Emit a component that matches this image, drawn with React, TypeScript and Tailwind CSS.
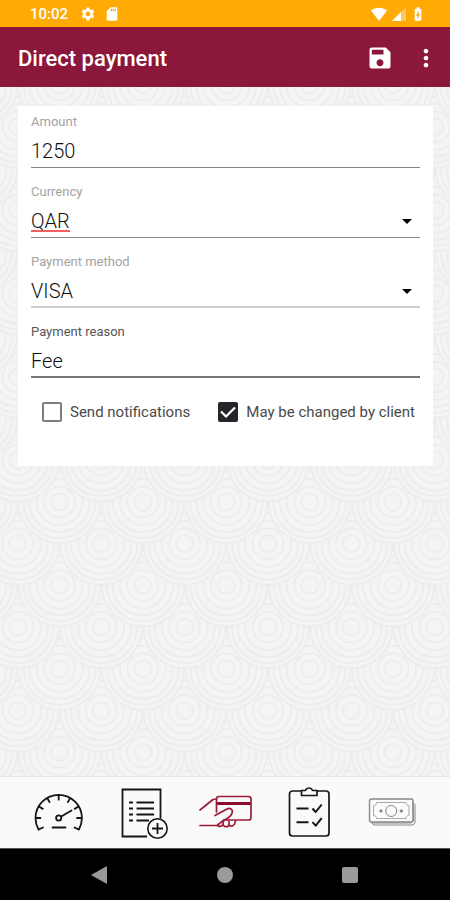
import { useState } from "react";
import type { ReactNode } from "react";
import { MdSettings, MdSdCard, MdSave, MdMoreVert, MdBatteryChargingFull } from "react-icons/md";

const TILE = 83.4;
const HALF = TILE / 2;
const RINGS = [41, 36, 30, 23, 15.5, 8.5];

function Backdrop() {
  // lower rows are drawn first so each row overlaps the one below it
  const rows = [3, 2, 1, 0, -1];

  return (
    <svg className="absolute inset-0 h-full w-full" aria-hidden="true">
      <defs>
        <pattern id="scales" width={TILE} height={TILE} patternUnits="userSpaceOnUse" patternTransform="translate(59.5 -2)">
          {rows.map((row) =>
            [-1, 0, 1].map((col) => {
              const cx = col * TILE + (row % 2 === 0 ? 0 : HALF);
              return RINGS.map((r) => (
                <circle key={`${row}-${col}-${r}`} cx={cx} cy={row * HALF} r={r} fill="#f5f3f4" stroke="#eceaeb" strokeWidth="1.5" />
              ));
            })
          )}
        </pattern>
      </defs>
      <rect width="100%" height="100%" fill="url(#scales)" />
    </svg>
  );
}

function StatusBar() {
  return (
    <div className="flex h-[27px] items-center justify-between bg-[#ffaa05] pt-px pr-6 pl-[30px] text-white">
      <div className="flex items-center">
        <span className="text-[15px] font-medium">10:02</span>
        <MdSettings className="ml-3 size-4" />
        <MdSdCard className="ml-2 size-4" />
      </div>
      <div className="flex items-center gap-1">
        <svg width="18" height="16" viewBox="0 0 18 16" fill="currentColor">
          <path d="M1 4.5C5.5 .8 12.500 .8 17 4.500L9 15z" />
        </svg>
        <svg width="14" height="14" viewBox="0 0 14 14" fill="currentColor">
          <path d="M0 14L14 0v14z" opacity=".35" />
          <path d="M0 14L9 5v9z" />
        </svg>
        <MdBatteryChargingFull className="size-4" />
      </div>
    </div>
  );
}

type FieldProps = {
  id: string;
  label: string;
  labelClass?: string;
  lineClass?: string;
  children: ReactNode;
};

function Field({ id, label, labelClass = "text-[#a3a3a3]", lineClass = "border-b border-[#858585]", children }: FieldProps) {
  return (
    <div className={`flex h-[62px] flex-col ${lineClass}`}>
      <label htmlFor={id} className={`text-[13px] leading-[32px] ${labelClass}`}>
        {label}
      </label>
      {children}
    </div>
  );
}

type SelectProps = {
  id: string;
  options: string[];
  spelling?: boolean;
};

function Select({ id, options, spelling = false }: SelectProps) {
  return (
    <div className="grid h-[26px] items-center">
      <select
        id={id}
        className="col-start-1 row-start-1 h-[26px] w-full appearance-none bg-transparent text-[20px] leading-6 font-light text-[#111] outline-none"
      >
        {options.map((o) => (
          <option key={o}>{o}</option>
        ))}
      </select>
      {spelling && (
        <span className="pointer-events-none col-start-1 row-start-1 mb-[2px] h-0.5 w-[39px] self-end bg-[#f2605f]" />
      )}
      <svg className="pointer-events-none col-start-1 row-start-1 mr-2 justify-self-end" width="10" height="5" viewBox="0 0 10 5">
        <path d="M0 0h10L5 5z" fill="#000" />
      </svg>
    </div>
  );
}

type CheckProps = {
  label: string;
  checked: boolean;
  onChange: (v: boolean) => void;
};

function Check({ label, checked, onChange }: CheckProps) {
  return (
    <label className="flex items-center gap-2 text-[15px] leading-5 whitespace-nowrap text-[#4a4a4a]">
      <span className="grid">
        <input
          type="checkbox"
          checked={checked}
          onChange={(e) => onChange(e.target.checked)}
          className="col-start-1 row-start-1 size-5 appearance-none rounded-xs border-2 border-[#7d7d7d] bg-white checked:border-[#262428] checked:bg-[#262428]"
        />
        {checked && (
          <svg className="pointer-events-none col-start-1 row-start-1" width="20" height="20" viewBox="0 0 20 20" fill="none" stroke="#fff" strokeWidth="2.200">
            <path d="M3 9.500l5 5L17 5.500" />
          </svg>
        )}
      </span>
      {label}
    </label>
  );
}

function GaugeIcon() {
  const ticks = [-180, -150, -120, -90, -60, -30, 0];
  return (
    <svg width="56" height="52" viewBox="0 0 56 52" fill="none" stroke="#151515" strokeWidth="1.8" strokeLinecap="round">
      <path d="M13 40.500L8.500 42.500C6.500 39 5.500 35 5.500 31a23.200 23.200 0 0 1 46.400 0c0 4-1 8-3 11.500L44.500 40.500" />
      {ticks.map((a) => (
        <path key={a} d="M47 31h4.500" transform={`rotate(${a} 28.7 31)`} />
      ))}
      <circle cx="28.700" cy="31" r="2.600" />
      <path d="M31.200 29.500L41.500 23.500M22.500 40.500h13" />
    </svg>
  );
}

function OrderIcon() {
  return (
    <svg width="56" height="52" viewBox="0 0 56 52" fill="none" stroke="#151515" strokeWidth="1.800">
      <path d="M34 49.500H9.500V2.500h38v29" />
      <path d="M16 15.500h4M16 21.500h4M16 27.500h4M16 33.500h4M23.500 15.500H41M23.500 21.500H41M23.500 27.500H41M23.500 33.500H36" />
      <circle cx="44.500" cy="41.500" r="9.700" fill="#fafafa" strokeWidth="1.600" />
      <path d="M39 41.500h11M44.500 36v11" />
    </svg>
  );
}

function PayIcon() {
  return (
    <svg width="56" height="52" viewBox="0 0 56 52" fill="none" stroke="#9b1c38" strokeWidth="1.700" strokeLinecap="round" strokeLinejoin="round">
      <path d="M3 23L16 12.500l3.500-.500" />
      <path d="M19.500 25V12c0-1.500 1-2.500 2.500-2.500h29.500c1.500 0 2.500 1 2.500 2.500v18.500c0 1.500-1 2.500-2.500 2.500H27" />
      <path d="M20 16.500h33.500" strokeWidth="3" stroke="#8b0f2c" strokeLinecap="butt" />
      <path d="M18 28.500L30 22c3-1.500 6 .500 5.300 3.500-.300 1.500-2.300 4-4.300 5.500-2 1.500-4.500 2-6 3.500L20 38.500H3" />
      <path d="M20.500 38.500c2 1.500 4.500 1 5-.500l1-3.500M26 37.500c1 3 5.500 3 6 0V34M32 37.500c1 2.500 4.500 2 5.500-.500l1-3" />
    </svg>
  );
}

function ChecklistIcon() {
  return (
    <svg width="56" height="52" viewBox="0 0 56 52" fill="none" stroke="#151515" strokeWidth="1.700" strokeLinejoin="round">
      <path d="M20 4H11.500a3 3 0 0 0-3 3v39a3 3 0 0 0 3 3h33.500a3 3 0 0 0 3-3V7a3 3 0 0 0-3-3H36" />
      <path d="M20.500 3.500v5h15.500v-5h-4c-1 0-1-2.500-4-2.500s-3 2.500-4 2.500z" />
      <path d="M15.500 21.500H27.500M15.500 35.200H27.500M31.500 21.500l3.200 3.500 6-7.500M31.500 35.200l3.200 3.500 6-7.500" strokeWidth="2" />
    </svg>
  );
}

function CashIcon() {
  return (
    <svg width="56" height="52" viewBox="0 0 56 52" fill="none" stroke="#888" strokeWidth="1">
      <path d="M49 15.500l2 2V36l-2 2H10l-3-2.500" />
      <path d="M49 15.500l.500 18.500-2.500 2H8" />
      <rect x="5.500" y="12" width="43.500" height="23" rx="2" strokeWidth="1.400" />
      <path d="M12.500 15.500h29.500c0 2 1 3 3 3v10c-2 0-3 1-3 3H12.500c0-2-1-3-3-3v-10c2 0 3-1 3-3z" stroke="#aaa" />
      <circle cx="27.200" cy="24" r="5.500" />
      <circle cx="17" cy="24" r="1.200" fill="#888" />
      <circle cx="37.300" cy="24" r="1.200" fill="#888" />
    </svg>
  );
}

const tabs = [
  { name: "Dashboard", icon: <GaugeIcon /> },
  { name: "New order", icon: <OrderIcon /> },
  { name: "Direct payment", icon: <PayIcon /> },
  { name: "Tasks", icon: <ChecklistIcon /> },
  { name: "Cash", icon: <CashIcon /> },
];

export default function App() {
  const [amount, setAmount] = useState("1250");
  const [reason, setReason] = useState("Fee");
  const [notify, setNotify] = useState(false);
  const [editable, setEditable] = useState(true);

  return (
    <div className="flex min-h-screen flex-col bg-[#f5f3f4] font-[Roboto,sans-serif]">
      <StatusBar />

      <header className="flex h-[60px] items-center bg-[#8b173b] pt-0.5 pr-[10px] pl-[18px] text-white">
        <h1 className="flex-1 text-[22px] font-medium">Direct payment</h1>
        <button aria-label="Save">
          <MdSave className="size-7" />
        </button>
        <button aria-label="More options" className="ml-[18px]">
          <MdMoreVert className="size-7" />
        </button>
      </header>

      <main className="relative flex-1 pt-[19px] pr-[17px] pb-6 pl-[18px]">
        <Backdrop />
        <form className="relative bg-white px-[13px] pb-11">
          <div className="flex flex-col gap-2">
            <Field id="amount" label="Amount">
              <input
                id="amount"
                inputMode="numeric"
                value={amount}
                onChange={(e) => setAmount(e.target.value)}
                className="h-[26px] w-full text-[20px] font-light text-[#111] outline-none"
              />
            </Field>
            <Field id="currency" label="Currency">
              <Select id="currency" options={["QAR", "USD", "EUR"]} spelling />
            </Field>
            <Field id="method" label="Payment method" lineClass="border-b-2 border-[#cfcfcf]">
              <Select id="method" options={["VISA", "Mastercard"]} />
            </Field>
            <Field id="reason" label="Payment reason" labelClass="text-[#555]" lineClass="border-b-2 border-[#757575]">
              <input
                id="reason"
                value={reason}
                onChange={(e) => setReason(e.target.value)}
                className="h-[26px] w-full text-[20px] font-light text-[#111] outline-none"
              />
            </Field>
          </div>

          <div className="mt-6 flex justify-between pr-[5px] pl-[11px]">
            <Check label="Send notifications" checked={notify} onChange={setNotify} />
            <Check label="May be changed by client" checked={editable} onChange={setEditable} />
          </div>
        </form>
      </main>

      <nav className="relative flex h-[72px] items-center justify-around border-t border-[#e8e6e7] bg-[#fafafa] px-4">
        {tabs.map((t) => (
          <button key={t.name} aria-label={t.name}>
            {t.icon}
          </button>
        ))}
      </nav>

      <div className="flex h-[52px] items-center justify-around border-t border-[#555] bg-black pr-[38px] pl-9">
        <button aria-label="Back">
          <svg width="18" height="18" viewBox="0 0 18 18">
            <path d="M1 9L17 0v18z" fill="#9a9a9a" />
          </svg>
        </button>
        <button aria-label="Home" className="size-4 rounded-full bg-[#9a9a9a]" />
        <button aria-label="Recent apps" className="size-4 rounded-xs bg-[#9a9a9a]" />
      </div>
    </div>
  );
}
